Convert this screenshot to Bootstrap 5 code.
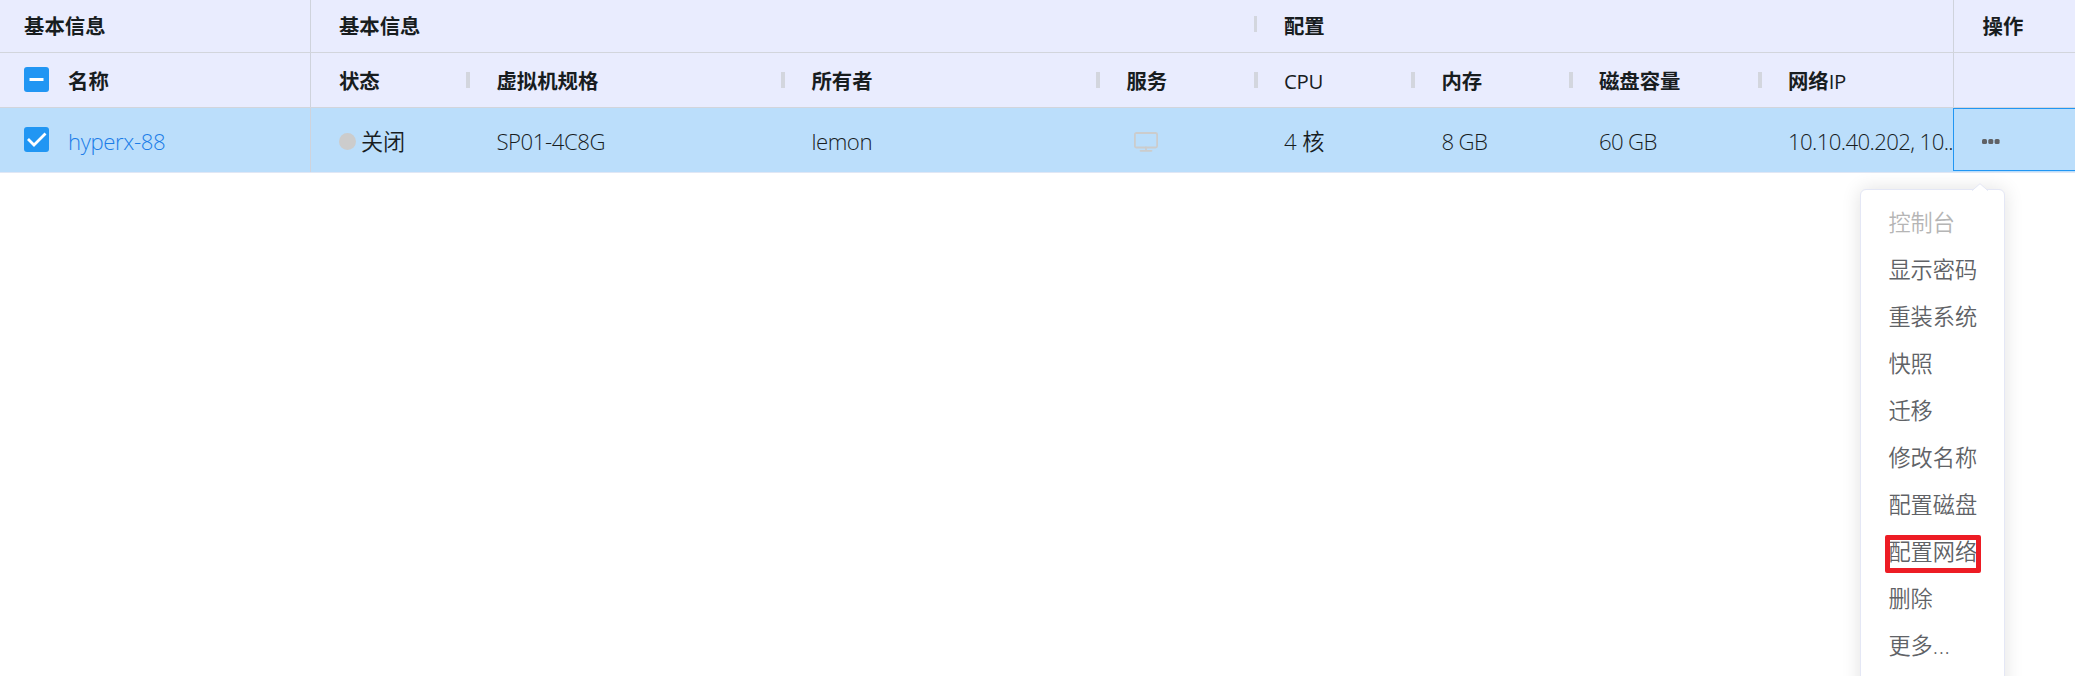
<!DOCTYPE html>
<html lang="zh-CN">
<head>
<meta charset="utf-8">
<meta name="viewport" content="width=device-width, initial-scale=1">
<title>虚拟机</title>
<link href="https://cdn.jsdelivr.net/npm/bootstrap@5.3.0/dist/css/bootstrap.min.css" rel="stylesheet">
<style>
body{font-family:"Open Sans","Noto Sans CJK SC",sans-serif;background:#fff;color:#181d1f;height:676px}
.vm-row{white-space:nowrap}
.vm-head{background:#e9ecfe;font-size:20.4px;font-weight:700;border-bottom:1px solid #d2d5dc;line-height:30px}
.vm-head.top{height:53px}
.vm-head.sub{height:55px}
.lat{font-weight:500;letter-spacing:-.3px}
.vm-data{background:#bbdefb;height:65px;border-bottom:1px solid #e0e7f5;font-size:22.2px;font-weight:350;line-height:32px}
.cell{position:relative;flex:none;display:flex;align-items:center;padding-left:28.4px;overflow:hidden}
.sub .cell{padding-top:1px}
.vm-data .cell{padding-top:3px}
.w-name{width:310.5px;border-right:1px solid #cfd3dc}
.vm-row .w-name{padding-left:24px}
.w-100u{width:157.5px}.w-120u{width:189px}.w-200u{width:315px}
.w-basic{width:945px}.w-conf{width:697px}
.w-ip{width:193px}
.w-act{flex:1;border-left:1px solid #cfd3dc;padding-left:29px}
.grip{overflow:visible}
.grip::after{content:"";position:absolute;right:-2px;top:19px;width:4px;height:16px;background:#d3d6de}
.top .grip::after{top:16px;right:-1px;width:3px}
.box{width:25px;height:25px;border-radius:3px;background:#2196f3;flex:none;margin-right:19px}
.sub .box{margin-bottom:3px}
.vm-data .box{margin-bottom:5px}
.box svg{display:block}
.vm-link{color:#1b7de8;text-decoration:none;letter-spacing:-.4px;margin-top:1px}
.tight{letter-spacing:-.45px}
.tighter{letter-spacing:-.65px}
.ip-text{letter-spacing:-.62px}
.dot{width:17px;height:17px;border-radius:50%;background:#ccc;margin-right:5px}
.vm-data .focused{border:1px solid #2196f3;border-right:0;height:63px;padding-left:28px;padding-top:4px}
.op-menu{position:absolute;left:1860px;top:189px;width:145px;height:510px;background:#fff;border:1px solid #e4e7f5;border-radius:6px;box-shadow:0 0 19px rgba(0,0,0,.12);padding:9px 0 0 27.4px;font-size:22.2px;font-weight:350;color:#606266}
.op-menu .arrow{position:absolute;left:110px;top:-7px}
.op-item{height:47px;line-height:47px;white-space:nowrap;position:relative}
.op-item.off{color:#b5b5b5}
.picked::after{content:"";position:absolute;left:-3.4px;top:7px;width:96px;height:38px;border:5px solid #ed1c24;border-radius:2px}
.more{letter-spacing:.6px}
</style>
</head>
<body class="overflow-hidden position-relative">
<header>
  <div class="vm-row vm-head top d-flex">
    <div class="cell w-name">基本信息</div>
    <div class="cell w-basic grip">基本信息</div>
    <div class="cell w-conf">配置</div>
    <div class="cell w-act">操作</div>
  </div>
  <div class="vm-row vm-head sub d-flex">
    <div class="cell w-name"><span class="box"><svg width="25" height="25"><path d="M5.500 12.500h14" stroke="#fff" stroke-width="3"/></svg></span>名称</div>
    <div class="cell w-100u grip">状态</div>
    <div class="cell w-200u grip">虚拟机规格</div>
    <div class="cell w-200u grip">所有者</div>
    <div class="cell w-100u grip">服务</div>
    <div class="cell w-100u grip"><span class="lat">CPU</span></div>
    <div class="cell w-100u grip">内存</div>
    <div class="cell w-120u grip">磁盘容量</div>
    <div class="cell w-ip">网络<span class="lat">IP</span></div>
    <div class="cell w-act"></div>
  </div>
</header>
<main class="vm-row vm-data d-flex">
  <div class="cell w-name"><span class="box"><svg width="25" height="25"><path d="M4 12l6 6L21.500 6.500" fill="none" stroke="#fff" stroke-width="2.8"/></svg></span><a class="vm-link">hyperx-88</a></div>
  <div class="cell w-100u"><span class="dot"></span>关闭</div>
  <div class="cell w-200u"><span class="tight">SP01-4C8G</span></div>
  <div class="cell w-200u"><span class="tight">lemon</span></div>
  <div class="cell w-100u"><svg class="ms-2" width="24" height="20" viewBox="0 0 24 20" fill="none" stroke="#ccc" stroke-width="1.8"><rect x=".9" y="1" width="22.2" height="14.5" rx="1.5"/><path d="M12 15.500v3M6.500 18.800h11" stroke-linecap="round"/></svg></div>
  <div class="cell w-100u"><span>4 核</span></div>
  <div class="cell w-100u"><span class="tighter">8 GB</span></div>
  <div class="cell w-120u"><span class="tighter">60 GB</span></div>
  <div class="cell w-ip"><span class="ip-text">10.10.40.202, 10..</span></div>
  <div class="cell w-act focused"><svg width="18" height="6" fill="#606266"><rect width="5" height="5" rx="1.500"/><rect x="6.300" width="5" height="5" rx="1.500"/><rect x="12.600" width="5" height="5" rx="1.500"/></svg></div>
</main>
<nav class="op-menu">
  <svg class="arrow" width="18" height="9"><path d="M0 8.500L1 8L9 .7L17 8l1 .5z" fill="#fff"/><path d="M1 7.700L9 .7l8 7" fill="none" stroke="#e4e7f5"/></svg>
  <div class="op-item off">控制台</div>
  <div class="op-item">显示密码</div>
  <div class="op-item">重装系统</div>
  <div class="op-item">快照</div>
  <div class="op-item">迁移</div>
  <div class="op-item">修改名称</div>
  <div class="op-item">配置磁盘</div>
  <div class="op-item picked">配置网络</div>
  <div class="op-item">删除</div>
  <div class="op-item">更多<span class="more">...</span></div>
</nav>
<script src="https://cdn.jsdelivr.net/npm/bootstrap@5.3.0/dist/js/bootstrap.bundle.min.js"></script>
</body>
</html>
